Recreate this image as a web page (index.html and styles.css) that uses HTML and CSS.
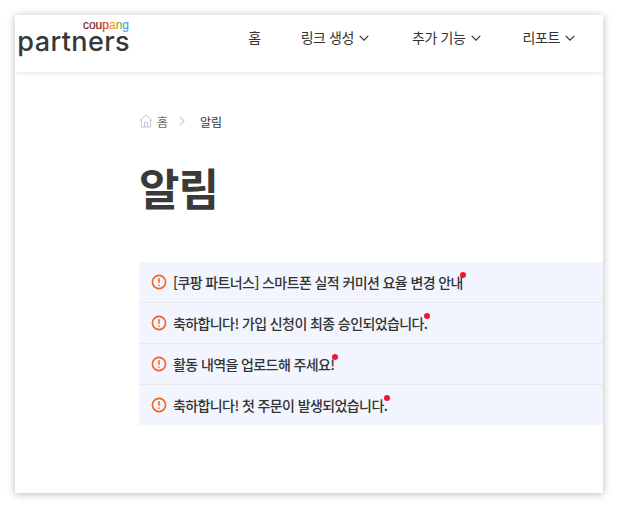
FILE: index.html
```html
<!DOCTYPE html>
<html lang="ko">

<head>
    <meta charset="UTF-8">
    <title>알림</title>
    <link rel="stylesheet" href="styles.css">
</head>

<body>
    <div class="page">
        <header class="header">
            <a class="logo">
                <span class="logo-top"><span class="c1">cou</span><span class="c2">p</span><span class="c3">a</span><span class="c4">n</span><span class="c5">g</span></span>
                <span class="logo-main">partners</span>
            </a>
            <nav class="nav">
                <a class="nav-home">홈</a>
                <a class="nav-link link-a">링크 생성
                    <svg class="chevron" viewBox="0 0 10 6"><path d="M.7.8 5 5.1 9.3.8"/></svg>
                </a>
                <a class="nav-link link-b">추가 기능
                    <svg class="chevron" viewBox="0 0 10 6"><path d="M.7.8 5 5.1 9.3.8"/></svg>
                </a>
                <a class="nav-link">리포트
                    <svg class="chevron" viewBox="0 0 10 6"><path d="M.7.8 5 5.1 9.3.8"/></svg>
                </a>
            </nav>
        </header>

        <main class="content">
            <div class="breadcrumb">
                <svg class="home-icon" viewBox="0 0 14 14"><path d="M1 6.6 7 1l6 5.6M2.4 5.4V13h9.2V5.4M5.4 13V8.6h3.2V13"/></svg>
                <span class="crumb-home">홈</span>
                <svg class="crumb-sep" viewBox="0 0 6 10"><path d="M.7.7 5 5 .7 9.3"/></svg>
                <span class="crumb-current">알림</span>
            </div>

            <h1 class="title">알림</h1>

            <ul class="notices">
                <li class="notice">
                    <svg class="alert-icon" viewBox="0 0 16 16"><circle cx="8" cy="8" r="6.6"/><path d="M8 4.2v4.6M8 10.6v1.2"/></svg>
                    <span class="notice-text">[쿠팡 파트너스] 스마트폰 실적 커미션 요율 변경 안내<i class="dot"></i></span>
                </li>
                <li class="notice">
                    <svg class="alert-icon" viewBox="0 0 16 16"><circle cx="8" cy="8" r="6.6"/><path d="M8 4.2v4.6M8 10.6v1.2"/></svg>
                    <span class="notice-text">축하합니다! 가입 신청이 최종 승인되었습니다.<i class="dot"></i></span>
                </li>
                <li class="notice">
                    <svg class="alert-icon" viewBox="0 0 16 16"><circle cx="8" cy="8" r="6.6"/><path d="M8 4.2v4.6M8 10.6v1.2"/></svg>
                    <span class="notice-text">활동 내역을 업로드해 주세요!<i class="dot"></i></span>
                </li>
                <li class="notice">
                    <svg class="alert-icon" viewBox="0 0 16 16"><circle cx="8" cy="8" r="6.6"/><path d="M8 4.2v4.6M8 10.6v1.2"/></svg>
                    <span class="notice-text">축하합니다! 첫 주문이 발생되었습니다.<i class="dot"></i></span>
                </li>
            </ul>
        </main>
    </div>
</body>

</html>
```

FILE: styles.css
```css
* {
    margin: 0;
    padding: 0;
    box-sizing: border-box;
    font-family: "Noto Sans CJK KR", "Noto Sans", sans-serif;
}

body {
    background: #fff;
    padding: 15px;
    height: 508px;
    overflow: hidden;
}

.page {
    width: 588px;
    height: 478px;
    background: #fff;
    box-shadow: 0 1px 8px rgba(0, 0, 0, 0.28);
    overflow: hidden;
}

.header {
    height: 57px;
    display: flex;
    align-items: flex-start;
    justify-content: space-between;
    background: #fff;
    box-shadow: 0 1px 5px rgba(0, 0, 0, 0.1);
    position: relative;
}

.logo {
    width: 112px;
    margin-left: 3px;
    margin-top: 4px;
    display: flex;
    flex-direction: column;
    align-items: flex-end;
}

.logo-top {
    font-family: "Liberation Sans", sans-serif;
    font-size: 12px;
    line-height: 12px;
    height: 13px;
    margin-right: 1px;
    -webkit-text-stroke: 0.2px;
}

.logo-top span {
    font-family: inherit;
}

.c1 { color: #8a1f24; }
.c2 { color: #e5342b; }
.c3 { color: #f0a31c; }
.c4 { color: #7cb342; }
.c5 { color: #4fa3e0; }

.logo-main {
    font-family: "Inter", sans-serif;
    font-size: 27px;
    line-height: 20px;
    font-weight: 500;
    letter-spacing: 0.4px;
    color: #37383a;
}

.nav {
    display: flex;
    align-items: center;
    height: 44px;
    color: #333;
    font-size: 14px;
    letter-spacing: -0.4px;
    padding-right: 28px;
}

.nav-home {
    margin-right: 40px;
}

.nav-link {
    display: flex;
    align-items: center;
    gap: 5px;
}

.link-a {
    margin-right: 43px;
}

.link-b {
    margin-right: 42px;
}

.chevron {
    width: 10px;
    height: 6px;
    fill: none;
    stroke: #333;
    stroke-width: 1.2;
    margin-top: 2px;
}

.content {
    padding: 0 0 0 124px;
}

.breadcrumb {
    display: flex;
    align-items: center;
    height: 20px;
    margin-top: 39px;
    font-size: 12px;
}

.home-icon {
    width: 14px;
    height: 14px;
    fill: none;
    stroke: #c4c4c4;
    stroke-width: 1;
}

.crumb-home {
    color: #666;
    margin-left: 4px;
}

.crumb-sep {
    width: 6px;
    height: 10px;
    fill: none;
    stroke: #c8c8c8;
    stroke-width: 1.1;
    margin: 0 15px 0 11px;
}

.crumb-current {
    color: #333;
}

.title {
    font-size: 44px;
    line-height: 60px;
    font-weight: 700;
    color: #3a3a3a;
    margin-top: 26px;
    letter-spacing: -1px;
}

.notices {
    list-style: none;
    margin-top: 45px;
    background: #f2f5fe;
}

.notice {
    height: 41px;
    display: flex;
    align-items: center;
    padding-left: 12px;
    border-bottom: 1px solid #e6e8ee;
}

.notice:last-child {
    height: 40px;
    border-bottom: none;
}

.alert-icon {
    width: 16px;
    height: 16px;
    flex: none;
    fill: none;
    stroke: #f26522;
    stroke-width: 1.6;
}

.notice-text {
    position: relative;
    margin-left: 6px;
    font-size: 14px;
    font-weight: 500;
    color: #333;
    letter-spacing: -0.6px;
}

.dot {
    position: absolute;
    top: 0;
    right: -3px;
    width: 6px;
    height: 6px;
    border-radius: 50%;
    background: #f5142d;
}
```
